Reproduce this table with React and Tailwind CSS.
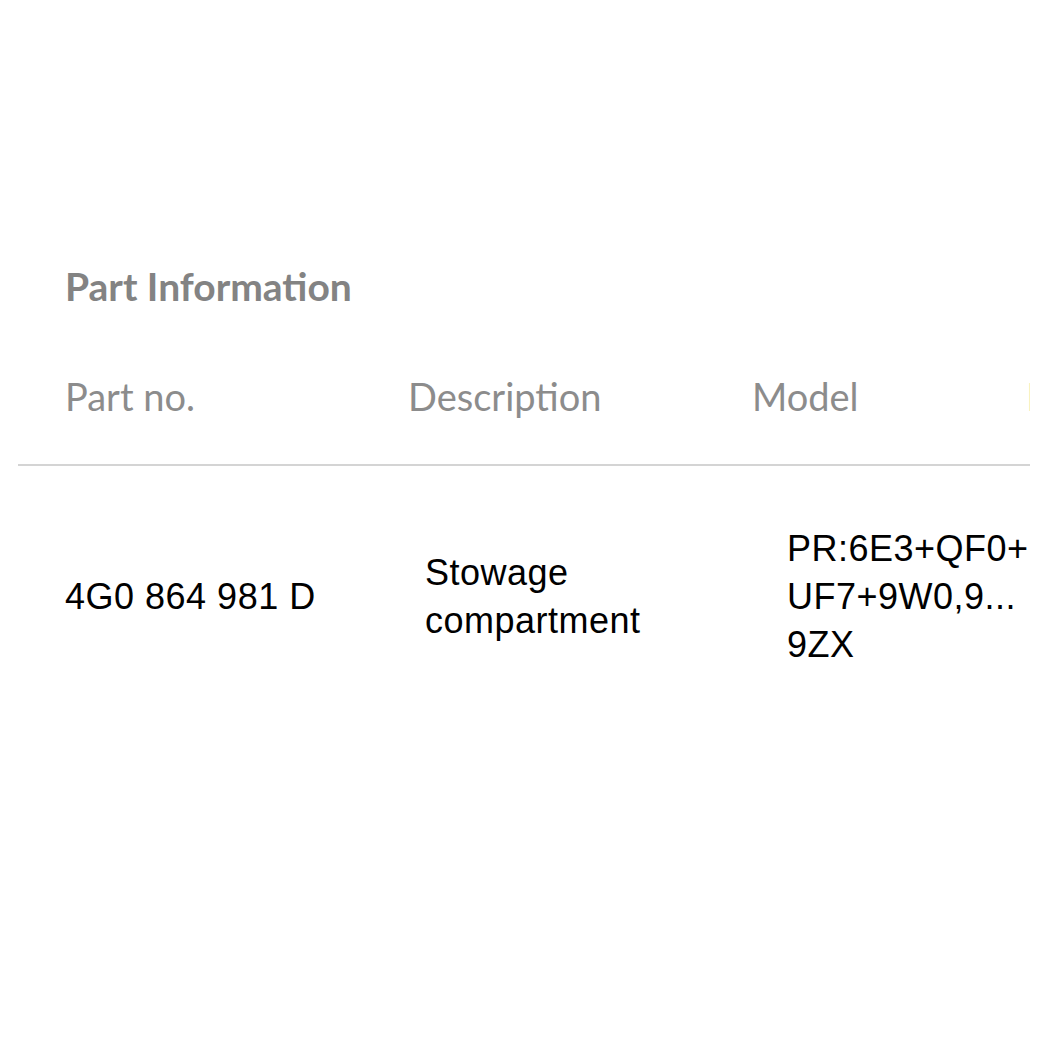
export default function App() {
  const headers = [
    { label: "Part no.", width: "w-[343px]", color: "text-[#8c8c8c]" },
    { label: "Description", width: "w-[344px]", color: "text-[#8c8c8c]" },
    { label: "Model", width: "w-[274px]", color: "text-[#8c8c8c]" },
    { label: "Installation", width: "w-[200px]", color: "text-[#ecebb8]" },
  ];

  return (
    <div className="w-[1050px] h-[1050px] bg-white font-['Liberation_Sans',Arial,sans-serif]">
      <div className="ml-[18px] w-[1012px] overflow-hidden pt-[263px]">
        <h2 className="pl-[47px] text-[39px] leading-[46px] font-bold text-[#838383] font-['Lato',sans-serif] whitespace-nowrap">
          Part Information
        </h2>

        {/* table header */}
        <div className="mt-[64px] flex pl-[47px] pb-[45px] border-b-2 border-[#d4d4d4] w-[1400px] font-['Lato',sans-serif] text-[38px] leading-[46px]">
          {headers.map((h) => (
            <div key={h.label} className={`${h.width} ${h.color} shrink-0 whitespace-nowrap`}>
              {h.label}
            </div>
          ))}
        </div>

        {/* table row */}
        <div className="flex items-center pl-[47px] pt-[59px] text-[36px] tracking-[0.5px] leading-[48px] text-black">
          <div className="w-[360px] shrink-0 whitespace-nowrap">4G0 864 981 D</div>
          <div className="w-[362px] shrink-0">
            <div>Stowage</div>
            <div>compartment</div>
          </div>
          <div className="shrink-0 whitespace-nowrap">
            <div>PR:6E3+QF0+</div>
            <div>UF7+9W0,9...</div>
            <div>9ZX</div>
          </div>
        </div>
      </div>
    </div>
  );
}
